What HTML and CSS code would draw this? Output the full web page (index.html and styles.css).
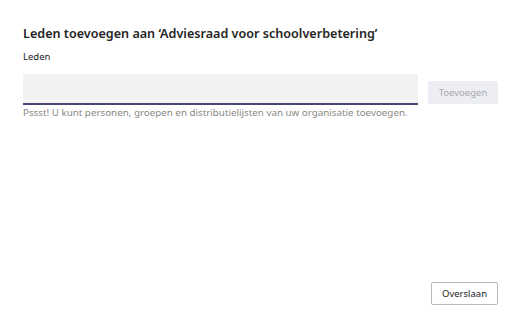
FILE: index.html
```html
<!DOCTYPE html>
<html lang="nl">
  <head>
    <meta charset="UTF-8" />
    <meta name="viewport" content="width=device-width, initial-scale=1.0" />
    <title>Leden toevoegen</title>
    <link rel="stylesheet" href="styles.css">
  </head>
  <body>
    <div class="dialog">
      <h2 class="title">Leden toevoegen aan ‘Adviesraad voor schoolverbetering’</h2>
      <label class="label" for="members">Leden</label>

      <div class="add-row">
        <div class="field">
          <input type="text" id="members" class="input" />
          <p class="hint">Pssst! U kunt personen, groepen en distributielijsten van uw organisatie toevoegen.</p>
        </div>
        <button class="btn btn-add" disabled>Toevoegen</button>
      </div>

      <div class="footer">
        <button class="btn btn-skip">Overslaan</button>
      </div>
    </div>
  </body>
</html>
```

FILE: styles.css
```css
body {
  margin: 0;
  font-family: "Noto Sans", "Open Sans", sans-serif;
  background: #fff;
  color: #252423;
}
.dialog {
  width: 520px;
  height: 330px;
  box-sizing: border-box;
  padding: 25px 22px 25px 23px;
  display: flex;
  flex-direction: column;
}
.title {
  margin: 0;
  font-size: 12.6px;
  font-weight: 600;
  line-height: 18px;
  color: #252423;
}
.label {
  margin-top: 7px;
  font-size: 9.5px;
  line-height: 14px;
}
.add-row {
  margin-top: 10px;
  display: flex;
  align-items: flex-start;
  gap: 10px;
}
.field {
  flex: 1;
}
.input {
  display: block;
  width: 100%;
  box-sizing: border-box;
  height: 31px;
  border: 0;
  border-bottom: 2px solid #464775;
  background: #f3f2f1;
  outline: none;
}
.hint {
  margin: 1px 0 0;
  font-size: 9.8px;
  line-height: 13px;
  color: #8a8886;
}
.btn {
  font-family: inherit;
  font-size: 9.5px;
  border-radius: 2px;
  cursor: pointer;
}
.btn-add {
  margin-top: 7px;
  width: 70px;
  height: 23px;
  border: 0;
  background: #edeef3;
  color: #a8a8ad;
}
.footer {
  margin-top: auto;
  display: flex;
  justify-content: flex-end;
}
.btn-skip {
  width: 67px;
  height: 23px;
  background: #fff;
  border: 1px solid #b9b8c4;
  color: #252423;
}
```
